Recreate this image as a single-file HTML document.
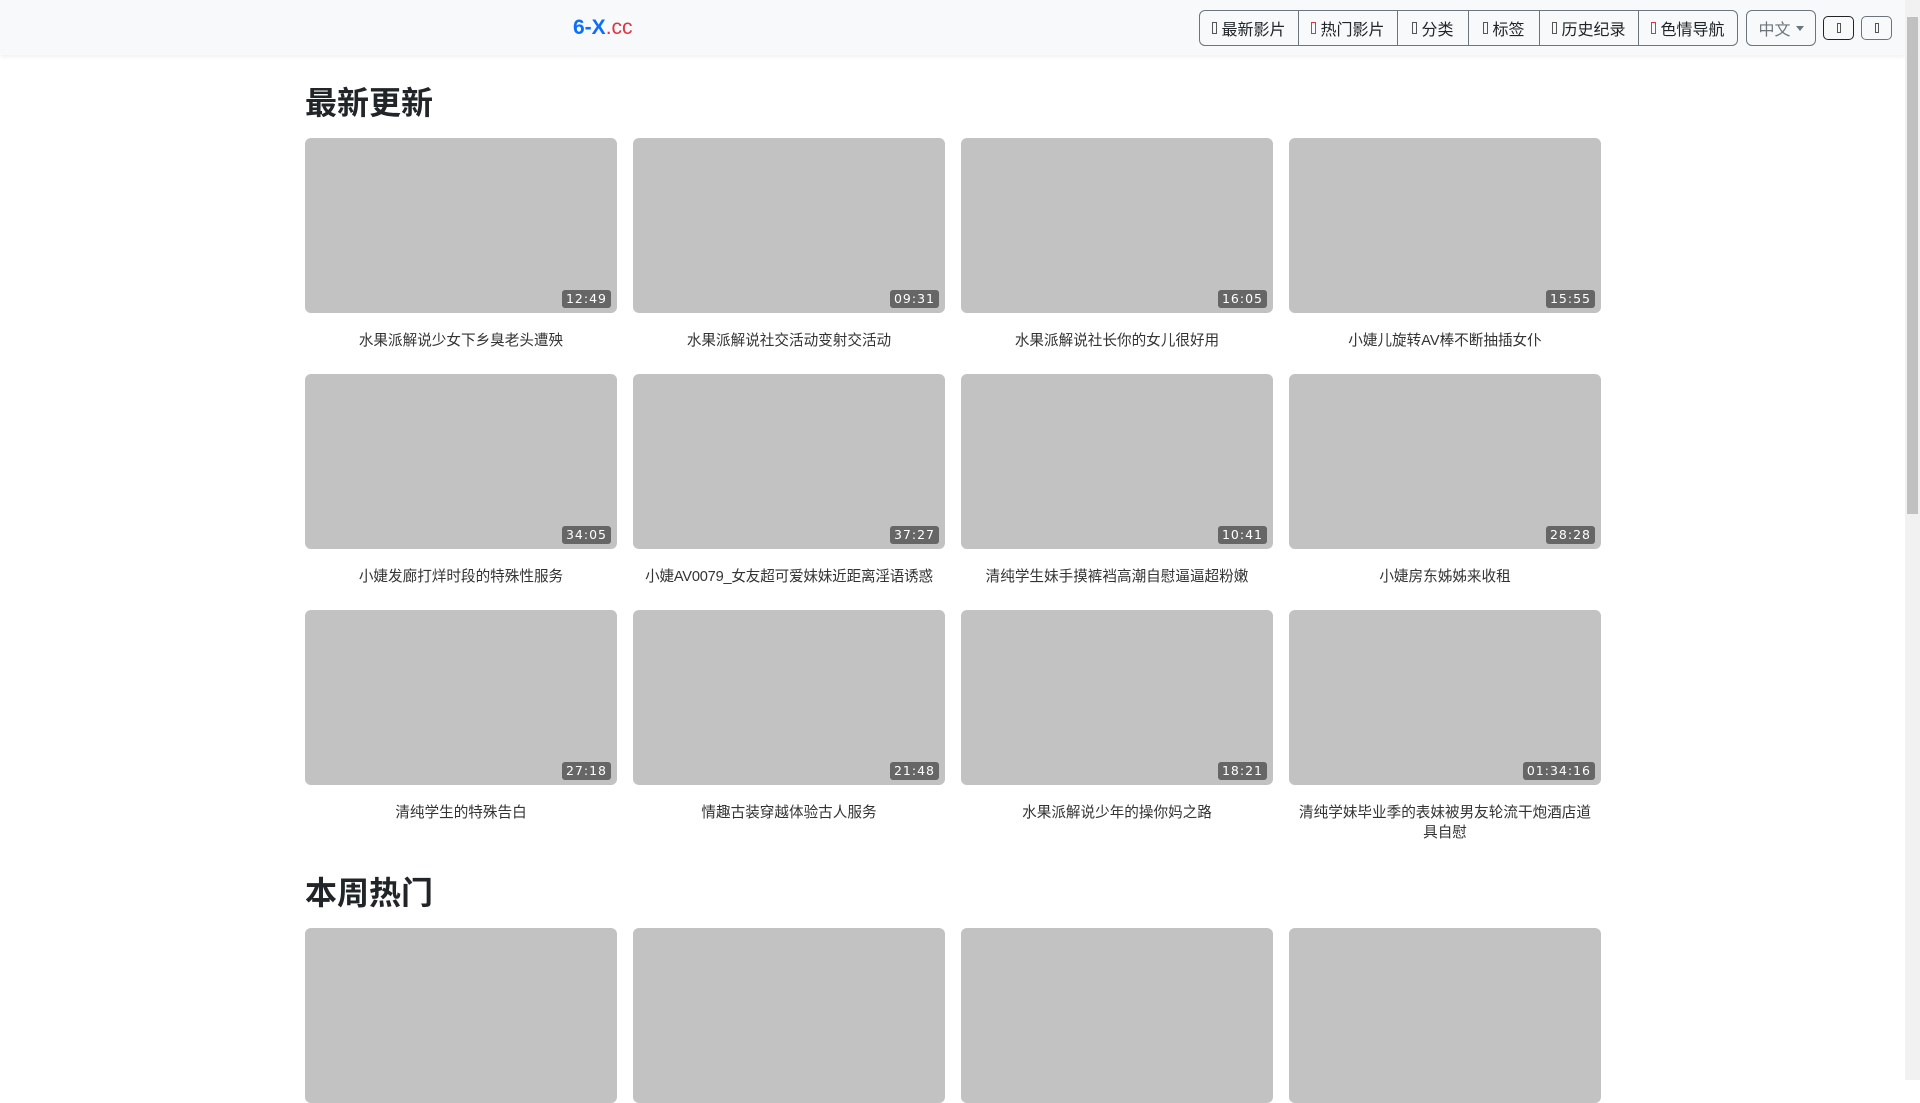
<!DOCTYPE html>
<html><head><meta charset="utf-8"><style>
*{box-sizing:border-box;margin:0;padding:0}
body{width:1920px;height:1080px;overflow:hidden;background:#fff;font-family:"Liberation Sans","Noto Sans CJK SC",sans-serif;color:#212529;position:relative}
.nav{position:absolute;left:0;top:0;width:1905px;height:55px;background:#f8f9fa;box-shadow:0 2px 4px rgba(0,0,0,.06)}
.logo{position:absolute;left:573px;top:16px;font-size:21px;font-weight:bold;color:#0d6efd}
.logo span{color:#dc3545;font-weight:normal}
.grp{position:absolute;left:1199px;top:10px;height:36px;display:flex;border:1px solid #6c757d;border-radius:6px;overflow:hidden}
.grp div{border-right:1px solid #6c757d;display:flex;align-items:center;justify-content:center;font-size:16px;color:#212529;height:34px}
.grp div:last-child{border-right:none}
.t{display:inline-block;width:5px;height:12px;border:1px solid #555;margin-right:4px}
.r{border-color:#dc3545}
.lang{position:absolute;left:1746px;top:10px;width:70px;height:36px;border:1px solid #6c757d;border-radius:6px;font-size:16px;color:#6c757d;display:flex;align-items:center;justify-content:center}
.lang:after{content:"";border-top:5px solid #6c757d;border-left:4px solid transparent;border-right:4px solid transparent;margin-left:5px}
.ib{position:absolute;top:16px;width:31px;height:24px;border:1px solid #212529;border-radius:5px;display:flex;align-items:center;justify-content:center}
.ib i{width:4px;height:10px;border:1px solid #555}
.sb{position:absolute;left:1905px;top:0;width:15px;height:1080px;background:#f1f1f1}
.sb div{position:absolute;left:2px;top:17px;width:11px;height:497px;background:#c1c1c1}
.main{position:absolute;left:305px;top:0;width:1296px}
h2{font-size:32px;font-weight:bold;line-height:38px;position:absolute;left:0}
.row{position:absolute;left:0;display:flex;gap:16px}
.card{width:312px}
.th{height:175px;background:#c2c2c2;border-radius:6px;position:relative}
.d{position:absolute;right:6px;bottom:5px;background:#666;color:#fff;font-size:12.5px;letter-spacing:1px;padding:1px 4px;border-radius:3px;line-height:16px;font-family:"DejaVu Sans",sans-serif}
.ti{text-align:center;font-size:14.6px;line-height:20px;margin-top:18px;color:#333;padding:0 4px}
</style></head><body>
<div class="nav">
<div class="logo">6-X<span>.cc</span></div>
<div class="grp">
<div style="width:99px"><i class="t"></i>最新影片</div>
<div style="width:99px"><i class="t r"></i>热门影片</div>
<div style="width:71px"><i class="t"></i>分类</div>
<div style="width:71px"><i class="t"></i>标签</div>
<div style="width:99px"><i class="t"></i>历史纪录</div>
<div style="width:98px"><i class="t r"></i>色情导航</div>
</div>
<div class="lang">中文</div>
<div class="ib" style="left:1823px"><i></i></div>
<div class="ib" style="left:1861px;border-color:#6c757d"><i></i></div>
</div>
<div class="sb"><div></div></div>
<div class="main">
<h2 style="top:84px">最新更新</h2>
<div class="row" style="top:138px">
<div class="card"><div class="th"><span class="d">12:49</span></div><div class="ti">水果派解说少女下乡臭老头遭殃</div></div>
<div class="card"><div class="th"><span class="d">09:31</span></div><div class="ti">水果派解说社交活动变射交活动</div></div>
<div class="card"><div class="th"><span class="d">16:05</span></div><div class="ti">水果派解说社长你的女儿很好用</div></div>
<div class="card"><div class="th"><span class="d">15:55</span></div><div class="ti">小婕儿旋转AV棒不断抽插女仆</div></div>
</div>
<div class="row" style="top:374px">
<div class="card"><div class="th"><span class="d">34:05</span></div><div class="ti">小婕发廊打烊时段的特殊性服务</div></div>
<div class="card"><div class="th"><span class="d">37:27</span></div><div class="ti" style="padding:0;white-space:nowrap;letter-spacing:-0.2px">小婕AV0079_女友超可爱妹妹近距离淫语诱惑</div></div>
<div class="card"><div class="th"><span class="d">10:41</span></div><div class="ti">清纯学生妹手摸裤裆高潮自慰逼逼超粉嫩</div></div>
<div class="card"><div class="th"><span class="d">28:28</span></div><div class="ti">小婕房东姊姊来收租</div></div>
</div>
<div class="row" style="top:610px">
<div class="card"><div class="th"><span class="d">27:18</span></div><div class="ti">清纯学生的特殊告白</div></div>
<div class="card"><div class="th"><span class="d">21:48</span></div><div class="ti">情趣古装穿越体验古人服务</div></div>
<div class="card"><div class="th"><span class="d">18:21</span></div><div class="ti">水果派解说少年的操你妈之路</div></div>
<div class="card"><div class="th"><span class="d">01:34:16</span></div><div class="ti" style="padding:0 10px">清纯学妹毕业季的表妹被男友轮流干炮酒店道具自慰</div></div>
</div>
<h2 style="top:874px">本周热门</h2>
<div class="row" style="top:928px">
<div class="card"><div class="th"></div></div>
<div class="card"><div class="th"></div></div>
<div class="card"><div class="th"></div></div>
<div class="card"><div class="th"></div></div>
</div>
</div>
</body></html>
